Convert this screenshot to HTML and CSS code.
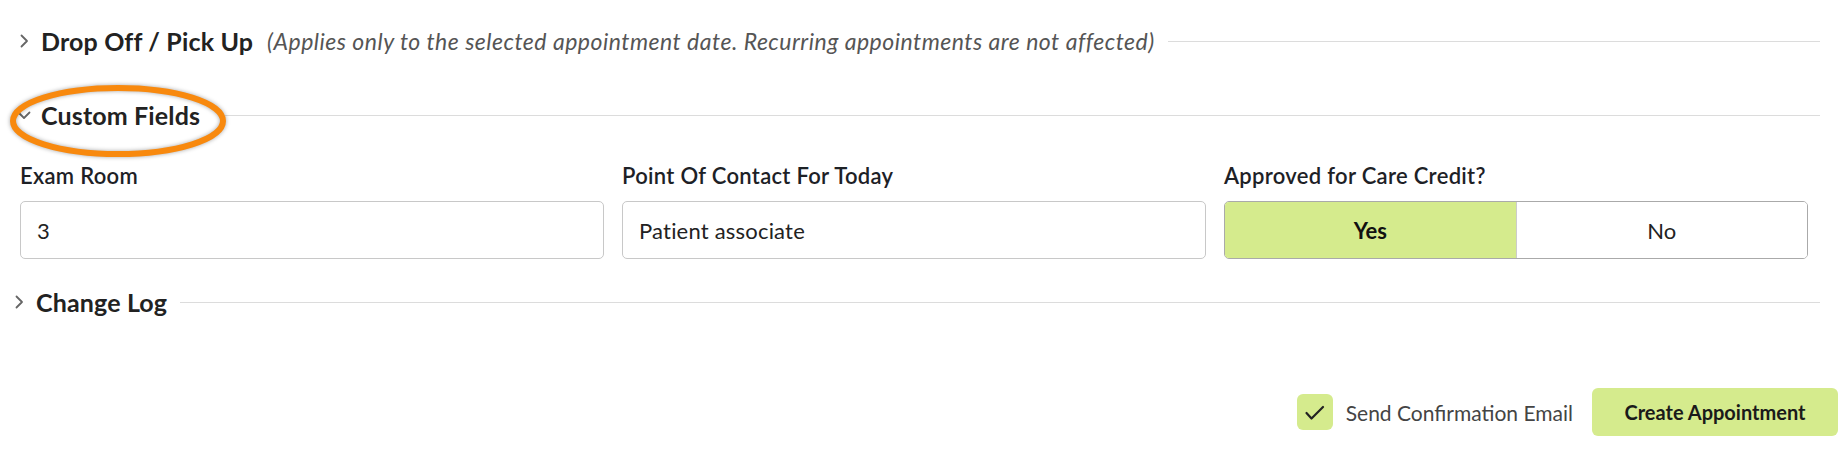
FILE: index.html
```html
<!DOCTYPE html>
<html lang="en">

<head>
    <meta charset="UTF-8">
    <meta name="viewport" content="width=device-width, initial-scale=1.0">
    <title>New Appointment</title>
    <link rel="stylesheet" href="styles.css">
</head>

<body>
    <div class="panel">
        <!-- Drop off section (collapsed) -->
        <div class="section-head">
            <span class="chevron-box">
                <svg width="10" height="14" viewBox="0 0 10 14"><path d="M2.5 1.5 L8 7 L2.5 12.5" fill="none" stroke="#666" stroke-width="1.8" stroke-linecap="round" stroke-linejoin="round" /></svg>
            </span>
            <h2 class="section-title">Drop Off / Pick Up</h2>
            <span class="section-note">(Applies only to the selected appointment date. Recurring appointments are not affected)</span>
            <span class="section-rule"></span>
        </div>

        <!-- Custom fields section (open) -->
        <div class="section-head section-head--open">
            <span class="chevron-box">
                <svg width="14" height="10" viewBox="0 0 14 10"><path d="M1.5 2.5 L7 8 L12.5 2.5" fill="none" stroke="#666" stroke-width="1.8" stroke-linecap="round" stroke-linejoin="round" /></svg>
            </span>
            <h2 class="section-title">Custom Fields</h2>
            <span class="section-rule section-rule--wide"></span>
            <svg class="highlight" width="240" height="100" viewBox="0 0 240 100"><ellipse cx="114" cy="51" rx="105" ry="33" /></svg>
        </div>

        <div class="fields">
            <div class="field">
                <label for="exam_room">Exam Room</label>
                <input type="text" id="exam_room" value="3" />
            </div>
            <div class="field">
                <label for="contact">Point Of Contact For Today</label>
                <input type="text" id="contact" value="Patient associate" />
            </div>
            <div class="field">
                <label>Approved for Care Credit?</label>
                <div class="toggle">
                    <button class="toggle-option is-active">Yes</button>
                    <button class="toggle-option">No</button>
                </div>
            </div>
        </div>

        <!-- Change log section (collapsed) -->
        <div class="section-head section-head--log">
            <span class="chevron-box">
                <svg width="10" height="14" viewBox="0 0 10 14"><path d="M2.5 1.5 L8 7 L2.5 12.5" fill="none" stroke="#666" stroke-width="1.8" stroke-linecap="round" stroke-linejoin="round" /></svg>
            </span>
            <h2 class="section-title">Change Log</h2>
            <span class="section-rule"></span>
        </div>

        <div class="footer">
            <label class="confirm">
                <span class="confirm-box">
                    <svg width="36" height="36" viewBox="0 0 36 36"><polyline points="9.5,19 14.5,24.5 26,13" fill="none" stroke="#222" stroke-width="2.2" stroke-linecap="round" stroke-linejoin="round" /></svg>
                </span>
                Send Confirmation Email
            </label>
            <button class="btn-create">Create Appointment</button>
        </div>
    </div>
</body>

</html>
```

FILE: styles.css
```css
/* Reset */
* {
    margin: 0;
    padding: 0;
    box-sizing: border-box;
}

body {
    font-family: 'Lato', sans-serif;
    background-color: #ffffff;
    color: #222;
}

.panel {
    padding: 21px 22px 0 14px;
}

/* Section headers */
.section-head {
    display: flex;
    align-items: center;
    height: 40px;
    position: relative;
}

.section-head + .section-head {
    margin-top: 34px;
}

.section-head--log {
    margin-left: -5px;
}

.chevron-box {
    width: 14px;
    display: flex;
    justify-content: center;
    margin: 0 10px 0 3px;
}

.section-title {
    font-size: 25px;
    font-weight: 700;
    letter-spacing: 0.15px;
    color: #222;
    line-height: 1;
    white-space: nowrap;
}

.section-note {
    font-size: 23px;
    font-style: italic;
    letter-spacing: 0.5px;
    color: #555;
    margin-left: 14px;
    white-space: nowrap;
}

.section-rule {
    flex: 1;
    height: 1px;
    background-color: #dcdcdc;
    margin-left: 13px;
}

.section-rule--wide {
    margin-left: 25px;
}

/* Orange annotation ring */
.highlight {
    position: absolute;
    left: -10px;
    top: -25px;
    overflow: visible;
    pointer-events: none;
}

.highlight ellipse {
    fill: none;
    stroke: #f8890e;
    stroke-width: 6;
    filter: drop-shadow(0 0 2px rgba(0, 0, 0, 0.35));
}

/* Fields */
.fields {
    display: grid;
    grid-template-columns: repeat(3, 1fr);
    column-gap: 18px;
    margin: 28px 12px 0 6px;
}

.field label {
    display: block;
    font-size: 22px;
    font-weight: 600;
    letter-spacing: 0.3px;
    line-height: 26px;
    color: #1d2126;
    margin-bottom: 12px;
}

.field input {
    width: 100%;
    height: 58px;
    border: 1px solid #c8c8c8;
    border-radius: 5px;
    padding: 0 16px;
    font-family: 'Lato', sans-serif;
    font-size: 22px;
    letter-spacing: 0.2px;
    color: #222;
}

.toggle {
    display: flex;
    height: 58px;
    border: 1px solid #aaa;
    border-radius: 5px;
    overflow: hidden;
}

.toggle-option {
    flex: 1;
    border: none;
    background-color: #fff;
    font-family: 'Lato', sans-serif;
    font-size: 22px;
    color: #222;
}

.toggle-option + .toggle-option {
    border-left: 1px solid #ccc;
}

.toggle-option.is-active {
    background-color: #d5eb8d;
    font-weight: 700;
    color: #111;
}

.fields + .section-head {
    margin-top: 23px;
}

/* Footer */
.footer {
    display: flex;
    justify-content: flex-end;
    align-items: center;
    margin: 66px -18px 0 0;
}

.confirm {
    display: flex;
    align-items: center;
    gap: 13px;
    font-size: 21px;
    color: #444;
}

.confirm-box {
    width: 36px;
    height: 36px;
    border-radius: 6px;
    background-color: #d5eb8d;
    display: flex;
}

.btn-create {
    margin-left: 19px;
    width: 246px;
    height: 48px;
    border: none;
    border-radius: 6px;
    background-color: #d5eb8d;
    font-family: 'Lato', sans-serif;
    font-size: 20px;
    font-weight: 700;
    color: #1a1a1a;
}
```
